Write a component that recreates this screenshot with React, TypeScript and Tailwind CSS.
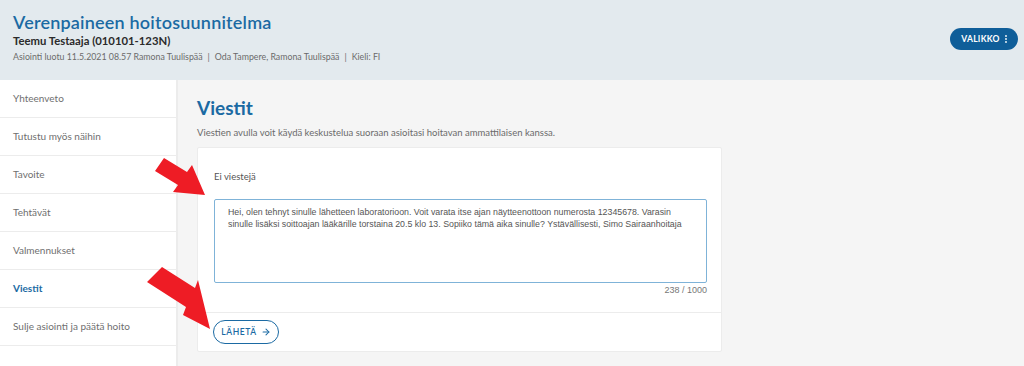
import { ArrowRight } from 'lucide-react';

const navItems = [
  'Yhteenveto',
  'Tutustu myös näihin',
  'Tavoite',
  'Tehtävät',
  'Valmennukset',
  'Viestit',
  'Sulje asiointi ja päätä hoito',
];

const message =
  'Hei, olen tehnyt sinulle lähetteen laboratorioon. Voit varata itse ajan näytteenottoon numerosta 12345678. Varasin sinulle lisäksi soittoajan lääkärille torstaina 20.5 klo 13. Sopiiko tämä aika sinulle? Ystävällisesti, Simo Sairaanhoitaja';

export default function App() {
  return (
    <div className="relative h-[366px] w-[1024px] overflow-hidden bg-[#f5f5f5] font-['Lato',sans-serif]">
      {/* Header */}
      <header className="flex h-[80px] items-start justify-between bg-[#e3eaee] px-[13px] pt-[11px]">
        <div>
          <h1 className="text-[18px] leading-[23px] font-semibold tracking-[0.2px] text-[#1b6aa3]">
            Verenpaineen hoitosuunnitelma
          </h1>
          <div className="mt-[0px] text-[11.3px] leading-[14px] font-bold text-[#2b2b2b]">
            Teemu Testaaja (010101-123N)
          </div>
          <div className="mt-[3px] text-[8.8px] leading-[12px] text-[#6b6b6b]">
            Asiointi luotu 11.5.2021 08.57 Ramona Tuulispää
            <span className="mx-[5px]">|</span>
            Oda Tampere, Ramona Tuulispää
            <span className="mx-[5px]">|</span>
            Kieli: FI
          </div>
        </div>
        <button className="mt-[17px] mr-[-7px] flex h-[22px] w-[68px] items-center justify-center gap-[5px] rounded-full bg-[#0f5e99] text-[8.5px] font-bold tracking-[0.3px] text-white">
          VALIKKO
          <svg width="2" height="8" viewBox="0 0 2 8" fill="white">
            <circle cx="1" cy="1" r="0.9" />
            <circle cx="1" cy="4" r="0.9" />
            <circle cx="1" cy="7" r="0.9" />
          </svg>
        </button>
      </header>

      <div className="flex h-[286px]">
        {/* Sidebar */}
        <nav className="w-[178px] shrink-0 border-r-2 border-[#ececec] bg-white">
          {navItems.map((item) => (
            <div
              key={item}
              className={
                item === 'Viestit'
                  ? 'flex h-[38px] items-center border-b border-[#ececec] px-[13px] text-[10px] font-bold text-[#1b6aa3]'
                  : 'flex h-[38px] items-center border-b border-[#ececec] px-[13px] text-[10px] text-[#6f6f6f]'
              }
            >
              {item}
            </div>
          ))}
        </nav>

        {/* Main */}
        <main className="flex-1 pl-[19px] pt-[16px]">
          <h2 className="text-[19px] leading-[24px] font-bold text-[#1b6aa3]">Viestit</h2>
          <p className="mt-[7px] text-[9.5px] leading-[12px] text-[#6b6b6b]">
            Viestien avulla voit käydä keskustelua suoraan asioitasi hoitavan ammattilaisen kanssa.
          </p>

          <div className="mt-[8px] w-[525px] rounded-[2px] border border-[#ececec] bg-white">
            <div className="px-[16px] pt-[23px] pb-[16px]">
              <div className="text-[9.5px] leading-[12px] text-[#555]">Ei viestejä</div>
              <div className="mt-[16px] h-[84px] w-[493px] rounded-[2px] border border-[#7fb3d8] px-[13px] py-[6px] font-['Liberation_Sans',sans-serif] text-[8.8px] leading-[12px] text-[#555]">
                {message}
              </div>
              <div className="mt-[1px] w-[493px] text-right font-['Liberation_Sans',sans-serif] text-[9px] leading-[12px] text-[#777]">
                238 / 1000
              </div>
            </div>
            <div className="border-t border-[#ececec] px-[15px] pt-[7px] pb-[7px]">
              <button className="flex h-[24px] w-[66px] items-center justify-center gap-[4px] rounded-full border-[1.5px] border-[#1b6aa3] text-[8.5px] font-semibold tracking-[0.6px] text-[#1b6aa3]">
                LÄHETÄ
                <ArrowRight className="h-[10px] w-[10px]" strokeWidth={2.5} />
              </button>
            </div>
          </div>
        </main>
      </div>

      {/* Annotation arrows */}
      <svg className="pointer-events-none absolute inset-0" width="1024" height="366">
        <polygon
          fill="#ee1c25"
          points="164,158 187,172 192,165 205,195 173,192 178,185 155,171"
        />
        <polygon
          fill="#ee1c25"
          points="162,267 195,288 198,280 210,329 183,315 186,307 147,282"
        />
      </svg>
    </div>
  );
}
